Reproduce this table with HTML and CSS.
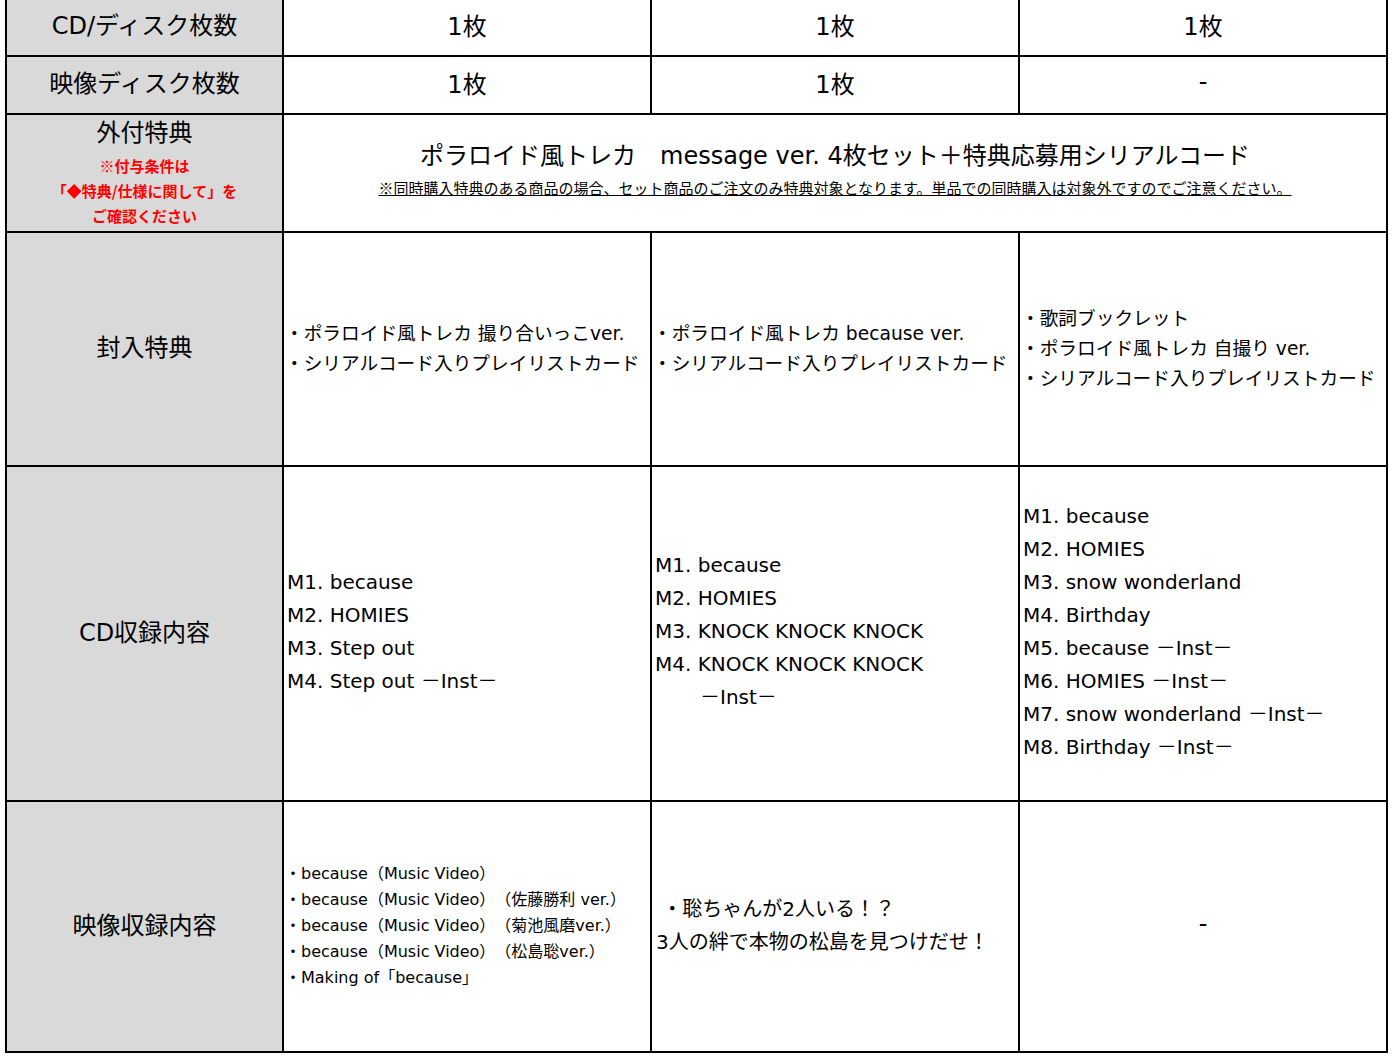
FILE: index.html
```html
<!DOCTYPE html>
<html lang="ja">
<head>
<meta charset="utf-8">
<title>仕様</title>
<link rel="stylesheet" href="styles.css">
</head>
<body>
<div class="sheet">
  <div class="cell head">CD/ディスク枚数</div>
  <div class="cell val">1枚</div>
  <div class="cell val">1枚</div>
  <div class="cell val">1枚</div>

  <div class="cell head">映像ディスク枚数</div>
  <div class="cell val">1枚</div>
  <div class="cell val">1枚</div>
  <div class="cell val">-</div>

  <div class="cell head head-top">
    <div class="head-title">外付特典</div>
    <div class="red-note">
      <div>※付与条件は</div>
      <div>「◆特典/仕様に関して」を</div>
      <div>ご確認ください</div>
    </div>
  </div>
  <div class="cell wide">
    <div class="wide-main">ポラロイド風トレカ　message ver. 4枚セット＋特典応募用シリアルコード</div>
    <div class="wide-note">※同時購入特典のある商品の場合、セット商品のご注文のみ特典対象となります。単品での同時購入は対象外ですのでご注意ください。</div>
  </div>

  <div class="cell head">封入特典</div>
  <div class="cell list bonus">
    <div>・ポラロイド風トレカ 撮り合いっこver.</div>
    <div>・シリアルコード入りプレイリストカード</div>
  </div>
  <div class="cell list bonus">
    <div>・ポラロイド風トレカ because ver.</div>
    <div>・シリアルコード入りプレイリストカード</div>
  </div>
  <div class="cell list bonus">
    <div>・歌詞ブックレット</div>
    <div>・ポラロイド風トレカ 自撮り ver.</div>
    <div>・シリアルコード入りプレイリストカード</div>
  </div>

  <div class="cell head">CD収録内容</div>
  <div class="cell list tracks">
    <div>M1. because</div>
    <div>M2. HOMIES</div>
    <div>M3. Step out</div>
    <div>M4. Step out －Inst－</div>
  </div>
  <div class="cell list tracks">
    <div>M1. because</div>
    <div>M2. HOMIES</div>
    <div>M3. KNOCK KNOCK KNOCK</div>
    <div>M4. KNOCK KNOCK KNOCK</div>
    <div class="indent">－Inst－</div>
  </div>
  <div class="cell list tracks">
    <div>M1. because</div>
    <div>M2. HOMIES</div>
    <div>M3. snow wonderland</div>
    <div>M4. Birthday</div>
    <div>M5. because －Inst－</div>
    <div>M6. HOMIES －Inst－</div>
    <div>M7. snow wonderland －Inst－</div>
    <div>M8. Birthday －Inst－</div>
  </div>

  <div class="cell head">映像収録内容</div>
  <div class="cell list video">
    <div>・because（Music Video）</div>
    <div>・because（Music Video）（佐藤勝利 ver.）</div>
    <div>・because（Music Video）（菊池風磨ver.）</div>
    <div>・because（Music Video）（松島聡ver.）</div>
    <div>・Making of「because」</div>
  </div>
  <div class="cell list story">
    <div>&nbsp;・聡ちゃんが2人いる！？</div>
    <div>3人の絆で本物の松島を見つけだせ！</div>
  </div>
  <div class="cell val">-</div>
</div>
</body>
</html>
```

FILE: styles.css
```css
html, body {
  margin: 0;
  padding: 0;
  background: #ffffff;
}

body {
  font-family: "DejaVu Sans", "Noto Sans CJK JP", sans-serif;
  color: #000000;
  overflow: hidden;
  text-spacing-trim: space-all;
}

.sheet {
  display: grid;
  grid-template-columns: 275px 366px 366px 366px;
  grid-template-rows: 56px 56px 116px 232px 333px 249px;
  gap: 2px;
  padding: 2px;
  background: #000000;
  width: max-content;
  margin: -3px 0 0 5px;
}

.cell {
  background: #ffffff;
  display: flex;
  flex-direction: column;
  justify-content: center;
  white-space: nowrap;
  overflow: hidden;
}

.head {
  background: #d9d9d9;
  align-items: center;
  font-size: 24px;
  padding-bottom: 7px;
}

.head-top {
  justify-content: flex-start;
  padding-bottom: 0;
}

.head-title {
  line-height: 36px;
}

.red-note {
  margin-top: 2px;
  font-family: "Noto Sans CJK JP", sans-serif;
  font-size: 15px;
  font-weight: bold;
  line-height: 25px;
  color: #ff0000;
  text-align: center;
}

.val {
  align-items: center;
  font-size: 24px;
  padding-bottom: 6px;
}

.wide {
  grid-column: span 3;
  align-items: center;
  padding-bottom: 5px;
}

.wide-main {
  font-size: 24px;
  line-height: 30px;
}

.wide-note {
  margin-top: 5px;
  font-family: "Noto Sans CJK JP", sans-serif;
  font-size: 15px;
  line-height: 24px;
  text-decoration: underline;
}

.list {
  align-items: flex-start;
}

.bonus {
  font-size: 18.7px;
  line-height: 30px;
  padding-left: 1px;
}

.tracks {
  font-size: 20px;
  line-height: 33px;
  padding-left: 3px;
  padding-bottom: 4px;
}

.indent {
  padding-left: 45px;
}

.video {
  font-size: 16px;
  line-height: 26px;
  padding-left: 1px;
  padding-bottom: 2px;
}

.story {
  font-size: 20px;
  line-height: 33px;
  padding-left: 4px;
  padding-bottom: 2px;
}
```
